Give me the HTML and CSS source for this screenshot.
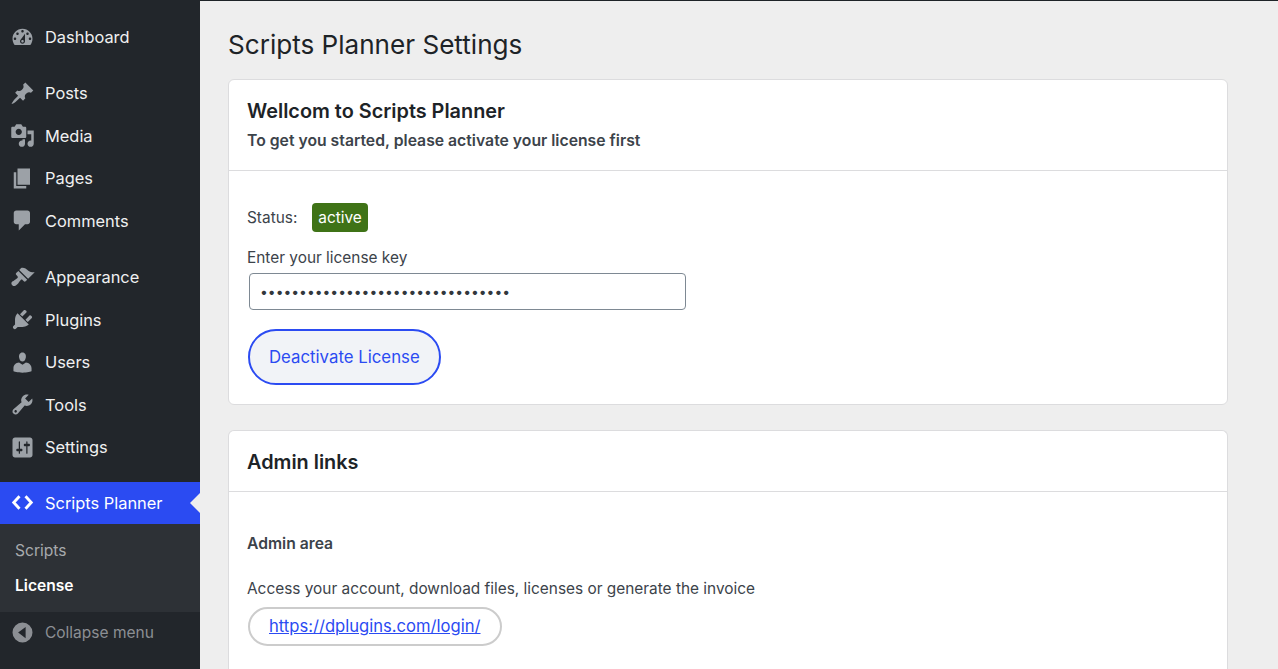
FILE: index.html
```html
<!DOCTYPE html>
<html lang="en">
<head>
    <meta charset="UTF-8">
    <meta name="viewport" content="width=device-width, initial-scale=1.0">
    <title>Scripts Planner Settings</title>
    <link rel="stylesheet" href="styles.css">
</head>
<body>
    <nav class="sidebar">
        <ul class="menu">
            <li class="menu-item"><svg class="icon" viewBox="0 0 20 20"><path fill-rule="evenodd" d="M3.76 16h12.48c1.1-1.37 1.76-3.11 1.76-5 0-4.42-3.58-8-8-8s-8 3.58-8 8c0 1.89.66 3.63 1.76 5zM10 4c.55 0 1 .45 1 1s-.45 1-1 1-1-.45-1-1 .45-1 1-1zM6 6c.55 0 1 .45 1 1s-.45 1-1 1-1-.45-1-1 .45-1 1-1zm8 0c.55 0 1 .45 1 1s-.45 1-1 1-1-.45-1-1 .45-1 1-1zm-5.37 5.55L12 7v6c0 1.1-.9 2-2 2s-2-.9-2-2c0-.57.24-1.08.63-1.45zM4 10c.55 0 1 .45 1 1s-.45 1-1 1-1-.45-1-1 .45-1 1-1zm12 0c.55 0 1 .45 1 1s-.45 1-1 1-1-.45-1-1 .45-1 1-1zm-5 3c0-.55-.45-1-1-1s-1 .45-1 1 .45 1 1 1 1-.45 1-1z"/></svg>Dashboard</li>
            <li class="menu-sep"></li>
            <li class="menu-item"><svg class="icon" viewBox="0 0 20 20"><path d="M10.44 3.02l1.82-1.82 6.36 6.35-1.83 1.82c-1.05-.68-2.48-.57-3.41.36l-.75.75c-.92.93-1.04 2.35-.35 3.41l-1.83 1.82-2.41-2.41-2.8 2.79c-.42.42-3.38 2.71-3.8 2.29s1.86-3.39 2.28-3.81l2.79-2.79L4.1 9.36l1.83-1.82c1.05.69 2.48.57 3.4-.36l.75-.75c.93-.92 1.05-2.35.36-3.41z"/></svg>Posts</li>
            <li class="menu-item"><svg class="icon" viewBox="0 0 20 20"><path fill-rule="evenodd" d="M13 11V4c0-.55-.45-1-1-1h-1.67L9 1H5L3.67 3H2c-.55 0-1 .45-1 1v7c0 .55.45 1 1 1h10c.55 0 1-.45 1-1zM7 4.5c1.38 0 2.5 1.12 2.5 2.5S8.38 9.5 7 9.5 4.5 8.38 4.5 7 5.62 4.5 7 4.5zM14 6h5v10.5c0 1.38-1.12 2.5-2.5 2.5S14 17.88 14 16.5s1.12-2.5 2.5-2.5c.17 0 .34.02.5.05V9h-3V6zm-4 8.05V13h2v3.5c0 1.38-1.12 2.5-2.5 2.5S7 17.88 7 16.5 8.12 14 9.5 14c.17 0 .34.02.5.05z"/></svg>Media</li>
            <li class="menu-item"><svg class="icon" viewBox="0 0 20 20"><path d="M6 15V2h10v13H6zm-1 1h8v2H3V5h2v11z"/></svg>Pages</li>
            <li class="menu-item"><svg class="icon" viewBox="0 0 20 20"><path d="M5 2h9c1.1 0 2 .9 2 2v7c0 1.1-.9 2-2 2h-2l-5 5v-5H5c-1.1 0-2-.9-2-2V4c0-1.1.9-2 2-2z"/></svg>Comments</li>
            <li class="menu-sep menu-sep-wide"></li>
            <li class="menu-item"><svg class="icon" viewBox="0 0 20 20"><path d="M14.48 11.06L7.41 3.99l1.5-1.5c.5-.56 2.3-.47 3.51.32 1.21.8 1.43 1.28 2.91 2.1 1.18.64 2.45 1.26 4.45.85zm-.71.71L6.7 4.7 4.93 6.47c-.39.39-.39 1.02 0 1.41l1.06 1.06c.39.39.39 1.03 0 1.42-.6.6-1.43 1.11-2.21 1.69-.35.26-.7.53-1.01.84C1.43 13.23.4 14.75 1.8 16.16c1.4 1.4 2.92.37 4.27-.97.31-.31.58-.66.84-1.01.58-.78 1.09-1.61 1.69-2.21.39-.39 1.03-.39 1.42 0l1.06 1.06c.39.39 1.02.39 1.41 0z"/></svg>Appearance</li>
            <li class="menu-item"><svg class="icon" viewBox="0 0 20 20"><path d="M13.11 4.36L9.87 7.6 8 5.73l3.24-3.24c.35-.34 1.05-.2 1.56.32.52.51.66 1.21.31 1.55zm-8 1.77l.91-1.12 9.01 9.01-1.19.84c-.71.71-2.63 1.16-3.82 1.16H6.14L4.9 17.26c-.59.59-1.54.59-2.12 0-.59-.58-.59-1.53 0-2.12l1.24-1.24v-3.88c0-1.13.4-3.19 1.09-3.89zm7.26 3.97l3.24-3.24c.34-.35 1.04-.21 1.55.31.52.51.66 1.21.31 1.55l-3.24 3.25z"/></svg>Plugins</li>
            <li class="menu-item"><svg class="icon" viewBox="0 0 20 20"><path d="M10 9.25c-2.27 0-2.73-3.44-2.73-3.44C7 4.02 7.82 2 9.97 2c2.16 0 2.98 2.02 2.71 3.81 0 0-.41 3.44-2.68 3.44zm0 2.57L12.72 10c2.39 0 4.52 2.33 4.52 4.53v2.49s-3.65 1.13-7.24 1.13c-3.65 0-7.24-1.13-7.24-1.13v-2.49c0-2.25 1.94-4.48 4.47-4.48z"/></svg>Users</li>
            <li class="menu-item"><svg class="icon" viewBox="0 0 20 20"><path fill-rule="evenodd" d="M16.68 9.77c-1.34 1.34-3.3 1.67-4.95.99l-5.41 6.52c-.99.99-2.59.99-3.58 0s-.99-2.59 0-3.57l6.52-5.42c-.68-1.65-.35-3.61.99-4.95 1.28-1.28 3.12-1.62 4.72-1.06l-2.89 2.89 2.82 2.82 2.86-2.87c.53 1.58.18 3.39-1.08 4.65zM3.81 16.21c.4.39 1.04.39 1.43 0 .4-.4.4-1.04 0-1.43-.39-.4-1.03-.4-1.43 0-.39.39-.39 1.03 0 1.43z"/></svg>Tools</li>
            <li class="menu-item"><svg class="icon" viewBox="0 0 20 20"><path fill-rule="evenodd" d="M18 16V4c0-1.1-.9-2-2-2H4c-1.1 0-2 .9-2 2v12c0 1.1.9 2 2 2h12c1.1 0 2-.9 2-2zM8 11h1c.55 0 1 .45 1 1s-.45 1-1 1H8v1.5c0 .28-.22.5-.5.5s-.5-.22-.5-.5V13H6c-.55 0-1-.45-1-1s.45-1 1-1h1V5.5c0-.28.22-.5.5-.5s.5.22.5.5V11zm5-2h-1c-.55 0-1-.45-1-1s.45-1 1-1h1V5.5c0-.28.22-.5.5-.5s.5.22.5.5V7h1c.55 0 1 .45 1 1s-.45 1-1 1h-1v5.5c0 .28-.22.5-.5.5s-.5-.22-.5-.5V9z"/></svg>Settings</li>
            <li class="menu-sep menu-sep-narrow"></li>
            <li class="menu-item active"><svg class="icon" viewBox="0 0 20 20"><path d="M7.6 5 3 10l4.6 5M12.4 5 17 10l-4.6 5" fill="none" stroke="currentColor" stroke-width="2.3"/></svg>Scripts Planner</li>
        </ul>
        <ul class="submenu">
            <li>Scripts</li>
            <li class="current">License</li>
        </ul>
        <div class="collapse"><svg class="icon" viewBox="0 0 20 20"><path fill-rule="evenodd" d="M10 2a8 8 0 1 1 0 16 8 8 0 0 1 0-16zm2.5 3.5L6.5 10l6 4.5z"/></svg>Collapse menu</div>
    </nav>

    <main class="content">
        <h1>Scripts Planner Settings</h1>

        <section class="card">
            <div class="card-head">
                <h2>Wellcom to Scripts Planner</h2>
                <p class="lead">To get you started, please activate your license first</p>
            </div>
            <div class="card-body">
                <div class="status">
                    <span>Status:</span>
                    <span class="badge">active</span>
                </div>
                <label for="license">Enter your license key</label>
                <input type="password" id="license" class="key-input" value="12345678901234567890123456789012">
                <button class="btn-primary" type="button">Deactivate License</button>
            </div>
        </section>

        <section class="card card-last">
            <div class="card-head card-head-single">
                <h2>Admin links</h2>
            </div>
            <div class="card-body links">
                <h3>Admin area</h3>
                <p>Access your account, download files, licenses or generate the invoice</p>
                <a class="btn-link" href="#">https://dplugins.com/login/</a>
            </div>
        </section>
    </main>
</body>
</html>
```

FILE: styles.css
```css
* {
    box-sizing: border-box;
}
html, body {
    height: 100%;
}
body {
    margin: 0;
    display: flex;
    height: 100vh;
    overflow: hidden;
    font-family: Inter, "Liberation Sans", sans-serif;
    font-size: 15.4px;
    color: #3c434a;
    background: #eeeeee;
}
ul {
    list-style: none;
    margin: 0;
    padding: 0;
}

/* sidebar */
.sidebar {
    width: 200px;
    flex-shrink: 0;
    padding-top: 16.2px;
    background: #22262b;
    color: #f0f0f1;
    font-size: 16.4px;
}
.menu-item {
    display: flex;
    align-items: center;
    height: 42.5px;
    position: relative;
}
.menu-sep {
    height: 13.5px;
}
.menu-sep-wide {
    height: 14px;
}
.menu-sep-narrow {
    height: 13px;
}
.icon {
    width: 25px;
    height: 25px;
    margin: 0 10px;
    flex-shrink: 0;
    fill: #9ca1a7;
}
.menu-item.active {
    height: 42px;
    background: #2b4bf2;
    color: #fff;
}
.menu-item.active .icon {
    color: #fff;
}
.menu-item.active::after {
    content: "";
    position: absolute;
    right: 0;
    top: 11px;
    border: 10px solid transparent;
    border-left: 0;
    border-right-color: #eeeeee;
}
.submenu {
    height: 88px;
    padding-top: 9px;
    background: #2d3136;
    color: #a7aaad;
    font-size: 15.6px;
}
.submenu li {
    height: 35px;
    line-height: 35px;
    padding-left: 15px;
}
.submenu .current {
    color: #fff;
    font-weight: 600;
}
.collapse {
    display: flex;
    align-items: center;
    height: 41px;
    color: #8c8f94;
    font-size: 15.5px;
}
.collapse .icon {
    fill: #8c8f94;
}

/* main area */
.content {
    flex: 1;
    min-width: 0;
    display: flex;
    flex-direction: column;
    padding: 0 50px 0 28px;
    border-top: 1px solid #1d2327;
}
h1 {
    margin: 27px 0 17px;
    font-size: 26.1px;
    line-height: 34px;
    font-weight: 400;
    color: #1d2327;
}
.card {
    margin-bottom: 25px;
    background: #fff;
    border: 1px solid #dcdcde;
    border-radius: 6px;
}
.card-last {
    flex: 1;
    margin-bottom: 0;
    border-bottom: 0;
    border-radius: 6px 6px 0 0;
}
.card-head {
    padding: 18px 18px 17px;
    border-bottom: 1px solid #dcdcde;
}
.card-head-single {
    padding-bottom: 16px;
}
.card-head h2 {
    margin: 0;
    font-size: 19.85px;
    line-height: 26px;
    font-weight: 600;
    color: #1d2327;
}
.lead {
    margin: 5px 0 0;
    font-size: 15.75px;
    font-weight: 600;
    line-height: 24px;
}
.card-body {
    padding: 32px 18px 19px;
}
.status {
    display: flex;
    align-items: center;
    gap: 15px;
    height: 29px;
}
.badge {
    height: 29px;
    padding: 0 6px;
    line-height: 29px;
    border-radius: 4px;
    background: #3f7317;
    color: #fff;
}
label {
    display: block;
    margin-top: 14px;
    line-height: 24px;
}
.key-input {
    display: block;
    width: 437px;
    height: 37px;
    margin: 3px 0 19px 2px;
    padding: 0 10px;
    border: 1px solid #7e8993;
    border-radius: 4px;
    font-family: inherit;
    font-size: 13.9px;
    color: #32373c;
    background: #fff;
}
.btn-primary {
    display: block;
    height: 56px;
    margin-left: 1px;
    padding: 0 19px;
    border: 2px solid #2b4bf2;
    border-radius: 28px;
    background: #f1f3f7;
    color: #2b4bf2;
    font-family: inherit;
    font-size: 16.8px;
}
.links {
    padding-top: 40px;
    padding-bottom: 0;
}
.links h3 {
    margin: 0;
    font-size: 15.7px;
    line-height: 24px;
    font-weight: 600;
}
.links p {
    margin: 21px 0 6px;
    line-height: 24px;
}
.btn-link {
    display: inline-block;
    height: 39px;
    margin-left: 1px;
    padding: 0 19px;
    font-size: 16.6px;
    line-height: 35px;
    border: 2px solid #cccccc;
    border-radius: 20px;
    color: #2b4bf2;
}
```
